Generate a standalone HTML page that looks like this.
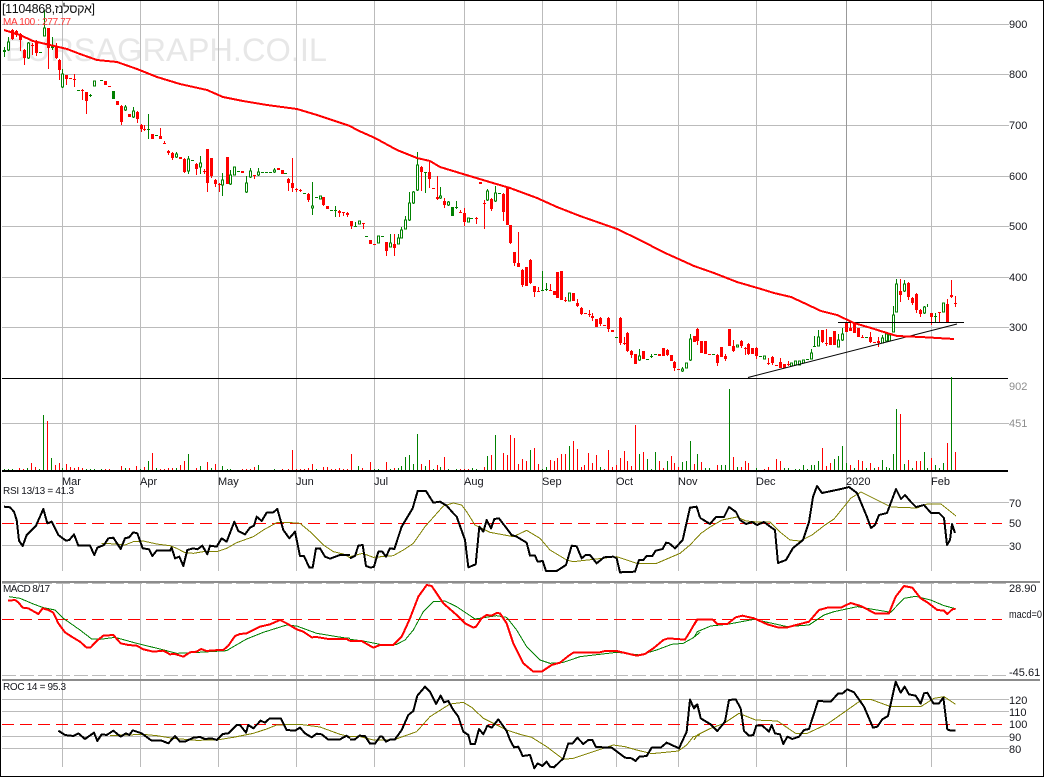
<!DOCTYPE html>
<html><head><meta charset="utf-8"><title>Chart</title>
<style>
html,body{margin:0;padding:0;background:#fff;width:1044px;height:777px;overflow:hidden}
svg{display:block}
text{font-family:"Liberation Sans",Arial,sans-serif;font-size:11px;fill:#15161c}
.w{fill:none;stroke-width:1}
.l{fill:none;stroke-linejoin:round;shape-rendering:crispEdges}
</style></head><body>
<svg width="1044" height="777" viewBox="0 0 1044 777" xmlns="http://www.w3.org/2000/svg">
<rect width="1044" height="777" fill="#fff"/>
<text x="5" y="61" textLength="322" lengthAdjust="spacingAndGlyphs" style="font-size:32px;fill:#e7e7e7">BURSAGRAPH.CO.IL</text>
<g shape-rendering="crispEdges">
<path fill="none" stroke="#bbb" stroke-width="1" d="M62.5 0V378M140.5 0V378M218.5 0V378M296.5 0V378M374.5 0V378M464.5 0V378M542.5 0V378M616.5 0V378M678.5 0V378M756.5 0V378M931.5 0V378
M62.5 378V471M140.5 378V471M218.5 378V471M296.5 378V471M374.5 378V471M464.5 378V471M542.5 378V471M616.5 378V471M678.5 378V471M756.5 378V471M931.5 378V471
M62.5 472V571M140.5 472V571M218.5 472V571M296.5 472V571M374.5 472V571M464.5 472V571M542.5 472V571M616.5 472V571M678.5 472V571M756.5 472V571M931.5 472V571
M62.5 583V767M140.5 583V767M218.5 583V767M296.5 583V767M374.5 583V767M464.5 583V767M542.5 583V767M616.5 583V767M678.5 583V767M756.5 583V767M931.5 583V767
M2 24.5H1009M2 74.5H1009M2 125.5H1009M2 176.5H1009M2 226.5H1009M2 277.5H1009M2 327.5H1009M2 423.5H1009M2 502.5H1009M2 545.5H1009
M2 699.5H1009M2 711.5H1009M2 736.5H1009M2 748.5H1009"/>
<path fill="none" stroke="#999" stroke-width="1" d="M846.5 0V571M846.5 583V767"/>
<path fill="none" stroke="#bbb" stroke-width="1" stroke-dasharray="14 4" d="M2 583.5H1009M2 675.5H1009"/>
<path fill="none" stroke="#8c8c8c" stroke-width="2" d="M2 582H1040M2 680H1040"/>
<path fill="none" stroke="#000" stroke-width="1" d="M2 378.5H1008"/>
<path fill="none" stroke="#000" stroke-width="2" d="M2 471H1008"/>
<path fill="none" stroke="#f00" stroke-width="1" stroke-dasharray="12 6" d="M2 523.5H1002M2 619.5H1002M2 724.5H1002"/>

<!-- volume -->
<g transform="translate(.5,0)">
<path fill="none" stroke="#f00" d="M19 470v-2M23 470v-1M31 470v-7M35 470v-3M47 470v-49M55 470v-5M59 470v-7M66 470v-6M70 470v-3M74 470v-2M78 470v-3M82 470v-2M105 470v-1M109 470v-1M121 470v-4M129 470v-2M136 470v-4M144 470v-3M152 470v-17M160 470v-1M164 470v-1M168 470v-2M172 470v-2M180 470v-5M184 470v-9M196 470v-2M207 470v-8M215 470v-6M242 470v-1M246 470v-1M250 470v-1M254 470v-3M282 470v-1M288 470v-1M292 470v-20M296 470v-1M300 470v-1M304 470v-1M308 470v-2M312 470v-6M323 470v-3M327 470v-3M331 470v-1M335 470v-1M339 470v-2M343 470v-1M347 470v-1M351 470v-16M362 470v-2M370 470v-8M386 470v-8M394 470v-2M421 470v-6M429 470v-10M437 470v-5M444 470v-13M460 470v-1M464 470v-1M468 470v-1M484 470v-3M491 470v-15M503 470v-17M507 470v-15M510 470v-35M514 470v-32M518 470v-6M522 470v-11M526 470v-9M534 470v-22M538 470v-6M550 470v-10M554 470v-9M557 470v-12M561 470v-16M565 470v-16M573 470v-29M577 470v-21M581 470v-3M584 470v-5M588 470v-17M592 470v-7M596 470v-15M604 470v-1M608 470v-20M612 470v-3M616 470v-5M620 470v-12M624 470v-19M627 470v-9M631 470v-4M635 470v-45M643 470v-18M659 470v-9M663 470v-2M671 470v-14M674 470v-7M678 470v-3M694 470v-6M701 470v-8M717 470v-5M733 470v-13M741 470v-3M745 470v-9M748 470v-7M764 470v-1M768 470v-3M776 470v-11M780 470v-9M822 470v-22M826 470v-4M830 470v-7M850 470v-5M858 470v-10M862 470v-9M870 470v-7M878 470v-3M900 470v-56M908 470v-10M916 470v-9M920 470v-9M931 470v-12M947 470v-27M955 470v-18"/>
<path fill="none" stroke="#008000" d="M4 470v-1M8 470v-1M12 470v-1M27 470v-2M39 470v-1M43 470v-55M51 470v-12M62 470v-2M86 470v-1M90 470v-1M94 470v-1M101 470v-1M125 470v-2M140 470v-1M148 470v-9M156 470v-2M176 470v-2M188 470v-16M200 470v-4M211 470v-2M222 470v-4M227 470v-1M230 470v-1M258 470v-5M274 470v-1M316 470v-1M358 470v-4M374 470v-1M378 470v-1M390 470v-1M398 470v-2M401 470v-4M405 470v-13M409 470v-15M413 470v-6M417 470v-36M425 470v-4M433 470v-1M440 470v-3M448 470v-1M456 470v-1M472 470v-2M476 470v-1M487 470v-14M495 470v-35M530 470v-20M542 470v-1M546 470v-3M569 470v-24M600 470v-3M639 470v-16M647 470v-11M651 470v-1M655 470v-18M667 470v-9M682 470v-8M686 470v-9M690 470v-29M697 470v-16M705 470v-2M709 470v-2M721 470v-5M725 470v-5M729 470v-81M737 470v-3M756 470v-2M784 470v-2M788 470v-2M795 470v-1M799 470v-1M803 470v-5M807 470v-1M811 470v-5M814 470v-5M818 470v-9M834 470v-11M838 470v-14M842 470v-24M846 470v-7M854 470v-2M866 470v-2M874 470v-2M882 470v-10M886 470v-3M889 470v-2M893 470v-16M896 470v-61M904 470v-6M912 470v-2M924 470v-18M927 470v-2M935 470v-5M939 470v-2M943 470v-7M951 470v-93"/>
</g>

<!-- candles -->
<g transform="translate(.5,0)">
<path fill="none" stroke="#f00" stroke-width="1" d="M12 29V40M16 30V37M20 33V51M24 49V65M32 43V55M36 40V56M48 28V69M56 43V59M59 59V80M66 75V85M74 74V87M82 89V100M86 92V114M121 105V125M137 111V123M141 124V132M144 125V131M160 128V139M164 141V144M168 150V155M172 152V160M184 158V173M196 163V175M204 169V174M207 149V192M211 158V178M215 179V187M219 183V192M254 175V179M288 178V191M292 158V192M296 188V192M300 189V192M308 193V202M323 197V206M339 210V217M343 212V216M347 212V217M351 221V229M363 223V229M386 242V256M394 234V256M421 166V191M429 161V188M437 176V200M444 198V208M460 210V213M464 208V226M476 217V224M484 200V229M491 198V211M503 193V221M510 225V244M514 252V266M518 232V267M522 269V287M530 259V284M534 286V297M538 287V291M550 284V291M565 297V302M577 299V307M581 307V315M589 310V317M592 313V321M600 317V326M608 317V332M620 317V345M624 337V345M627 332V352M631 350V358M667 349V356M674 361V371M697 328V345M717 354V366M725 354V361M733 340V352M741 340V348M745 347V355M748 343V355M756 347V359M768 358V365M772 356V365M780 358V368M788 361V366M822 330V343M826 329V346M850 323V331M862 335V338M870 332V343M878 337V347M900 279V302M908 282V300M912 297V305M916 293V313M920 309V317M931 313V325M939 312V322M947 299V322M951 280V298M955 296V307"/>
<path fill="none" stroke="#f00" stroke-width="3" d="M12 30V39M16 31V35M20 34V40M24 50V58M32 45V46M36 42V53M48 28V48M56 47V58M59 60V70M66 75V79M70 78V79M74 79V80M82 90V91M86 92V101M105 81V85M109 86V87M117 101V105M121 106V122M129 114V117M137 112V119M141 125V129M144 129V130M152 134V139M160 136V139M164 143V144M168 151V153M172 153V158M180 157V159M184 159V172M196 164V169M204 171V172M207 149V183M211 158V176M215 180V184M219 184V185M227 157V184M242 171V173M254 175V176M278 168V170M282 170V174M288 179V183M292 183V188M296 189V190M300 190V191M308 194V200M323 197V205M327 206V209M339 211V213M343 212V213M347 213V215M351 221V226M363 223V224M370 240V244M374 244V245M386 242V251M394 244V248M421 167V172M429 172V179M433 188V189M437 197V199M444 201V205M460 212V213M464 213V222M476 218V219M480 182V184M484 203V204M491 199V209M503 194V212M507 187V225M510 225V243M514 252V263M518 263V267M522 270V285M526 267V286M530 260V283M534 286V292M538 291V292M550 290V291M554 291V295M557 272V298M561 271V300M565 300V301M573 293V301M577 303V306M581 308V314M585 313V314M589 314V315M592 316V318M596 319V327M600 318V324M604 325V326M608 318V329M612 330V332M620 318V343M624 343V344M627 333V351M631 351V355M635 354V364M643 351V359M659 354V356M663 348V356M667 350V355M671 355V361M674 362V368M678 369V370M694 336V342M697 329V341M701 341V353M705 341V354M709 354V355M717 355V363M721 347V357M725 356V359M729 329V346M733 346V351M741 341V346M745 348V349M748 344V354M752 348V354M756 348V356M768 363V364M772 357V363M776 365V366M780 362V368M784 364V368M788 364V365M822 330V342M826 343V344M830 337V345M834 331V345M846 323V332M850 328V331M854 323V333M858 328V337M862 337V338M870 337V342M874 342V343M878 341V343M900 291V295M908 283V297M912 298V303M916 294V310M920 310V314M931 313V317M939 312V313M947 304V322M951 295V297M955 303V304"/>
<path fill="none" stroke="#008000" stroke-width="1" d="M4 47V57M8 37V51M28 42V59M44 10V36M52 37V50M62 69V88M90 94V97M125 105V111M133 107V118M148 114V139M176 152V158M188 156V174M200 156V174M222 173V196M230 170V185M246 176V193M250 168V178M258 168V176M274 168V173M312 182V215M335 206V217M355 222V227M390 234V247M398 234V244M401 227V238M405 216V229M409 192V221M413 191V204M417 152V191M425 172V193M440 187V199M448 201V206M456 201V209M487 189V201M495 186V202M542 271V291M546 283V291M639 349V361M651 354V358M682 367V372M690 334V361M811 349V359M814 336V347M818 330V346M838 334V347M842 328V341M882 335V343M886 332V342M893 306V332M896 279V312M904 280V292M924 306V314M927 304V307M935 313V323"/>
<path fill="none" stroke="#008000" stroke-width="3" d="M4 50V52M40 52V53M52 46V48M78 90V91M90 95V96M101 80V81M113 91V99M148 129V130M156 135V136M192 160V161M238 171V172M262 172V173M266 172V173M270 172V173M285 173V174M304 193V194M316 197V198M331 210V211M335 210V211M355 226V227M366 236V237M382 236V237M425 172V173M452 207V216M456 207V208M471 218V219M499 193V194M542 290V291M546 289V290M616 337V338M647 359V360M651 356V357M655 354V355M713 354V355M760 356V357M807 359V360M814 346V347M866 337V338M935 316V317"/>
<path fill="#fff" stroke="#008000" stroke-width="1" d="M7 42h2v8h-2zM27 43h2v15h-2zM43 28h2v8h-2zM61 74h2v13h-2zM93 81h2v5h-2zM124 107h2v3h-2zM132 111h2v6h-2zM175 154h2v3h-2zM187 159h2v12h-2zM199 163h2v4h-2zM221 180h2v5h-2zM229 175h2v9h-2zM233 167h2v8h-2zM245 183h2v9h-2zM249 171h2v6h-2zM257 172h2v3h-2zM273 170h2v2h-2zM311 206h2v2h-2zM319 196h2v3h-2zM358 221h2v3h-2zM377 236h2v7h-2zM389 243h2v4h-2zM397 238h2v6h-2zM400 230h2v8h-2zM404 220h2v9h-2zM408 203h2v17h-2zM412 192h2v11h-2zM416 165h2v25h-2zM439 196h2v2h-2zM447 202h2v3h-2zM467 218h2v4h-2zM486 191h2v9h-2zM494 193h2v8h-2zM568 293h2v8h-2zM638 356h2v4h-2zM681 369h2v2h-2zM685 363h2v5h-2zM689 339h2v21h-2zM736 345h2v2h-2zM763 356h2v3h-2zM790 363h2v3h-2zM794 361h2v4h-2zM798 361h2v4h-2zM802 360h2v3h-2zM810 353h2v6h-2zM817 337h2v9h-2zM837 340h2v7h-2zM841 334h2v6h-2zM881 338h2v5h-2zM885 334h2v7h-2zM888 335h2v6h-2zM892 315h2v17h-2zM895 284h2v28h-2zM903 284h2v7h-2zM923 307h2v6h-2zM942 303h2v9h-2z"/>
</g>
</g>

<!-- trend lines -->
<path fill="none" stroke="#000" stroke-width="1" d="M748 377.5L957 324"/>
<path fill="none" stroke="#000" stroke-width="1" shape-rendering="crispEdges" d="M838 322.5H964"/>

<!-- MA -->
<path class="l" stroke="#f00" stroke-width="2" d="M4 30L20 35L33 41L50 45L67 49L80 54L97 60L117 62L137 69L157 77L180 84L207 90L223 97L243 101L267 105L297 109L317 115L350 126L357 130L375 138L397 150L417 158L430 161L440 167L463 174L493 183L510 188L537 198L557 207L580 216L600 223L617 229L640 240L663 252L683 261L694 266L714 273L737 282L761 289L774 293L791 297L804 303L821 311L837 315L854 323L871 328L887 333L897 336L921 337L954 339"/>

<!-- RSI -->
<g transform="translate(0,375) scale(.33333)">
<path class="l" stroke="#808000" stroke-width="3" d="M305 505L350 507L375 510L400 500L430 498L470 507L510 512L530 520L555 533L580 535L610 530L650 530L680 520L710 503L760 485L790 465L830 443L860 442L900 445L930 470L970 510L1000 530L1030 537L1050 548"/>
<path class="l" stroke="#000" stroke-width="6" d="M12 395L30 397L42 410L50 435L57 497L68 513L80 480L108 452L130 402L142 445L155 440L175 480L198 497L208 495L222 478L235 512L270 512L283 540L292 518L312 510L325 490L340 488L362 522L375 490L387 487L400 472L412 475L428 520L447 523L457 543L470 527L510 527L515 518L525 550L538 545L550 573L562 525L580 520L592 523L607 512L622 538L630 512L650 515L665 490L680 500L703 440L715 468L735 478L750 458L762 452L770 425L785 438L800 413L820 412L832 402L850 465L868 490L885 470L900 543L912 543L928 578L938 578L948 520L960 520L975 545L990 551L1020 540L1050 540"/>
</g>
<g transform="translate(350,375) scale(.33333)">
<path class="l" stroke="#808000" stroke-width="3" d="M0 545L38 535L70 547L130 542L160 525L190 505L225 455L280 393L310 384L335 390L350 410L375 450L420 472L490 485L530 466L570 490L600 525L650 555L670 560L800 545L860 565L920 565L990 535L1020 510L1050 478"/>
<path class="l" stroke="#000" stroke-width="6" d="M0 550L15 543L25 512L38 510L48 573L62 578L72 575L85 530L97 530L108 545L120 520L133 522L155 455L188 400L203 348L228 348L250 383L270 380L290 392L310 415L320 425L345 495L355 577L377 568L388 455L400 470L410 435L423 460L433 432L447 430L485 480L500 485L530 503L540 542L555 542L563 560L578 558L588 588L620 588L648 570L665 512L680 514L695 550L707 540L720 540L740 565L762 547L790 545L800 550L810 592L855 590L867 555L880 555L890 543L907 543L917 527L938 522L948 503L958 505L975 520L998 495L1020 398L1040 395L1050 428"/>
</g>
<path class="l" stroke="#808000" stroke-width="1" d="M700 534L710 527L722 520L737 517L746 521L757 522L770 522L780 532L790 540L800 541L812 535L825 525L834 519L851 498L861 492L871 497L891 507L917 508L927 504L941 504L956 516"/>
<path class="l" stroke="#000" stroke-width="2" d="M700 518L702 519L710 524L716 517L724 517L729 507L736 512L740 520L746 524L752 522L757 525L764 522L772 528L775 530L778 563L786 560L793 548L803 540L809 522L813 497L817 486L822 493L841 489L849 487L857 493L867 517L871 528L875 525L879 515L887 513L896 489L901 499L905 495L911 502L916 507L924 505L931 513L939 513L944 518L947 545L950 540L952 524L955 533"/>

<!-- MACD -->
<g transform="translate(0,575) scale(.33333)">
<path class="l" stroke="#008000" stroke-width="3" d="M27 65L60 70L100 87L130 98L165 105L190 130L240 165L275 192L300 193L345 187L410 205L480 222L530 235L580 233L680 227L700 215L740 192L790 172L860 150L890 153L950 175L1030 188L1050 190"/>
<path class="l" stroke="#f00" stroke-width="6" d="M24 77L45 75L55 82L68 98L85 100L115 117L128 100L145 105L160 113L175 145L195 172L215 185L240 200L260 218L272 217L290 198L310 182L340 180L362 205L385 210L410 212L430 223L460 230L490 227L510 238L525 237L550 245L570 232L590 230L603 222L620 228L640 226L670 225L685 212L705 183L720 177L740 175L780 155L810 148L840 135L860 145L890 163L910 170L935 187L950 186L985 192L1040 192L1050 198"/>
<path class="l" stroke="#808000" stroke-width="3" d="M330 482L430 478L470 482L520 490L590 496L650 495L700 487L760 475L800 462L830 450L900 448L960 456L1020 478L1050 485"/>
<path class="l" stroke="#000" stroke-width="6" d="M175 467L195 480L220 483L235 475L255 492L282 473L292 498L305 478L320 480L340 467L362 485L378 475L388 480L398 466L425 475L455 497L485 497L505 505L525 483L540 500L555 500L580 488L600 486L615 492L635 490L650 495L668 477L685 475L710 450L720 450L738 473L745 450L760 460L782 437L795 443L808 431L843 431L860 465L885 467L900 458L915 475L935 487L950 476L965 478L985 494L1020 493L1040 482L1050 490"/>
</g>
<g transform="translate(350,575) scale(.33333)">
<path class="l" stroke="#008000" stroke-width="3" d="M0 193L40 198L90 208L140 208L165 195L190 165L220 110L250 80L285 78L320 95L375 132L440 122L470 127L500 165L530 215L570 255L600 265L640 262L690 245L800 232L870 240L920 225L965 208L1000 205L1030 188L1050 172"/>
<path class="l" stroke="#f00" stroke-width="6" d="M0 198L35 198L70 218L90 210L130 210L155 185L178 135L205 65L230 30L245 33L260 55L280 85L320 120L345 145L370 158L378 155L395 130L410 120L425 122L440 114L450 115L470 145L490 205L520 265L550 290L575 290L605 270L630 263L655 243L670 233L715 232L745 233L765 228L800 228L860 242L885 237L910 220L940 195L955 190L1005 194L1020 170L1040 135L1050 133"/>
<path class="l" stroke="#808000" stroke-width="3" d="M0 485L30 485L70 495L130 495L200 470L240 425L300 387L340 382L365 397L400 430L470 465L510 478L545 487L590 515L640 553L670 550L730 530L790 510L825 515L860 525L905 536L985 528L1010 510L1030 485L1050 480"/>
<path class="l" stroke="#000" stroke-width="6" d="M0 493L15 493L28 482L45 483L60 506L75 506L90 485L97 485L108 500L120 494L135 493L155 465L175 420L190 408L202 362L225 335L240 350L258 387L272 362L282 382L295 378L310 405L325 425L340 470L355 480L362 507L375 507L387 462L400 478L412 452L425 458L445 433L470 468L480 495L492 517L505 515L518 543L540 540L553 580L563 565L577 573L590 560L600 575L612 577L640 550L655 505L668 505L682 488L700 507L715 495L727 495L738 516L785 518L825 548L845 550L857 558L868 545L890 543L905 518L932 518L950 503L987 520L1010 470L1020 374L1032 400L1042 390L1050 420"/>
</g>
<g transform="translate(694,575) scale(.33333)">
<path class="l" stroke="#008000" stroke-width="3" d="M0 187L10 170L50 153L100 148L180 133L280 155L345 150L390 120L420 110L490 95L590 112L630 70L665 64L710 75L750 92L785 101"/>
<path class="l" stroke="#f00" stroke-width="6" d="M0 150L10 133L55 133L70 147L100 147L125 127L145 122L180 130L220 148L255 158L280 157L345 140L375 105L400 98L440 98L470 84L500 93L545 116L585 115L605 65L630 33L655 38L680 70L700 82L730 105L750 107L760 117L775 103L785 102"/>
<path class="l" stroke="#808000" stroke-width="3" d="M0 495L10 480L50 460L90 445L135 415L185 435L250 438L305 475L340 475L400 447L460 405L505 373L530 373L590 395L680 395L720 370L750 365L785 388"/>
<path class="l" stroke="#000" stroke-width="6" d="M0 396L10 388L20 430L50 448L70 468L93 440L105 375L125 373L140 400L150 468L165 482L178 480L187 452L205 452L225 470L233 450L243 475L258 478L268 507L280 485L295 492L315 485L330 465L345 462L372 378L410 380L432 356L445 356L460 343L480 352L510 395L537 458L550 455L565 433L582 423L605 320L620 353L632 335L645 358L665 362L680 386L690 355L700 353L718 385L735 385L748 368L760 463L770 467L785 467"/>
</g>

<!-- frame -->
<g shape-rendering="crispEdges" fill="#000">
<rect x="0" y="0" width="1044" height="1"/>
<rect x="0" y="0" width="1" height="777"/>
<rect x="1043" y="0" width="1" height="777"/>
<rect x="0" y="776" width="1044" height="1"/>
</g>

<!-- labels -->
<text x="2" y="13" style="font-size:12.5px;fill:#111" textLength="93">[1104868,אקסלנז]</text>
<text x="3" y="25" style="font-size:10px;fill:#f33" textLength="68">MA 100 : 277.77</text>
<text x="1009" y="28">900</text><text x="1009" y="78">800</text><text x="1009" y="129">700</text><text x="1009" y="180">600</text><text x="1009" y="230">500</text><text x="1009" y="281">400</text><text x="1009" y="331">300</text>
<text x="1009" y="390" style="fill:#8d8d8d">902</text><text x="1009" y="427" style="fill:#8d8d8d">451</text>
<text x="62" y="485">Mar</text><text x="140" y="485">Apr</text><text x="218" y="485">May</text><text x="296" y="485">Jun</text><text x="374" y="485">Jul</text><text x="464" y="485">Aug</text><text x="542" y="485">Sep</text><text x="616" y="485">Oct</text><text x="678" y="485">Nov</text><text x="756" y="485">Dec</text><text x="846" y="485">2020</text><text x="931" y="485">Feb</text>
<text x="3" y="494" style="font-size:10px" textLength="71">RSI 13/13 = 41.3</text>
<text x="1009" y="507">70</text><text x="1009" y="527">50</text><text x="1009" y="550">30</text>
<text x="3" y="592" style="font-size:10px" textLength="47">MACD 8/17</text>
<text x="1009" y="592">28.90</text><text x="1009" y="618" textLength="33" lengthAdjust="spacingAndGlyphs">macd=0</text><text x="1009" y="676">-45.61</text>
<text x="3" y="690" style="font-size:10px" textLength="63">ROC 14 = 95.3</text>
<text x="1009" y="704">120</text><text x="1009" y="716">110</text><text x="1009" y="728">100</text><text x="1009" y="741">90</text><text x="1009" y="753">80</text>
</svg>
</body></html>
